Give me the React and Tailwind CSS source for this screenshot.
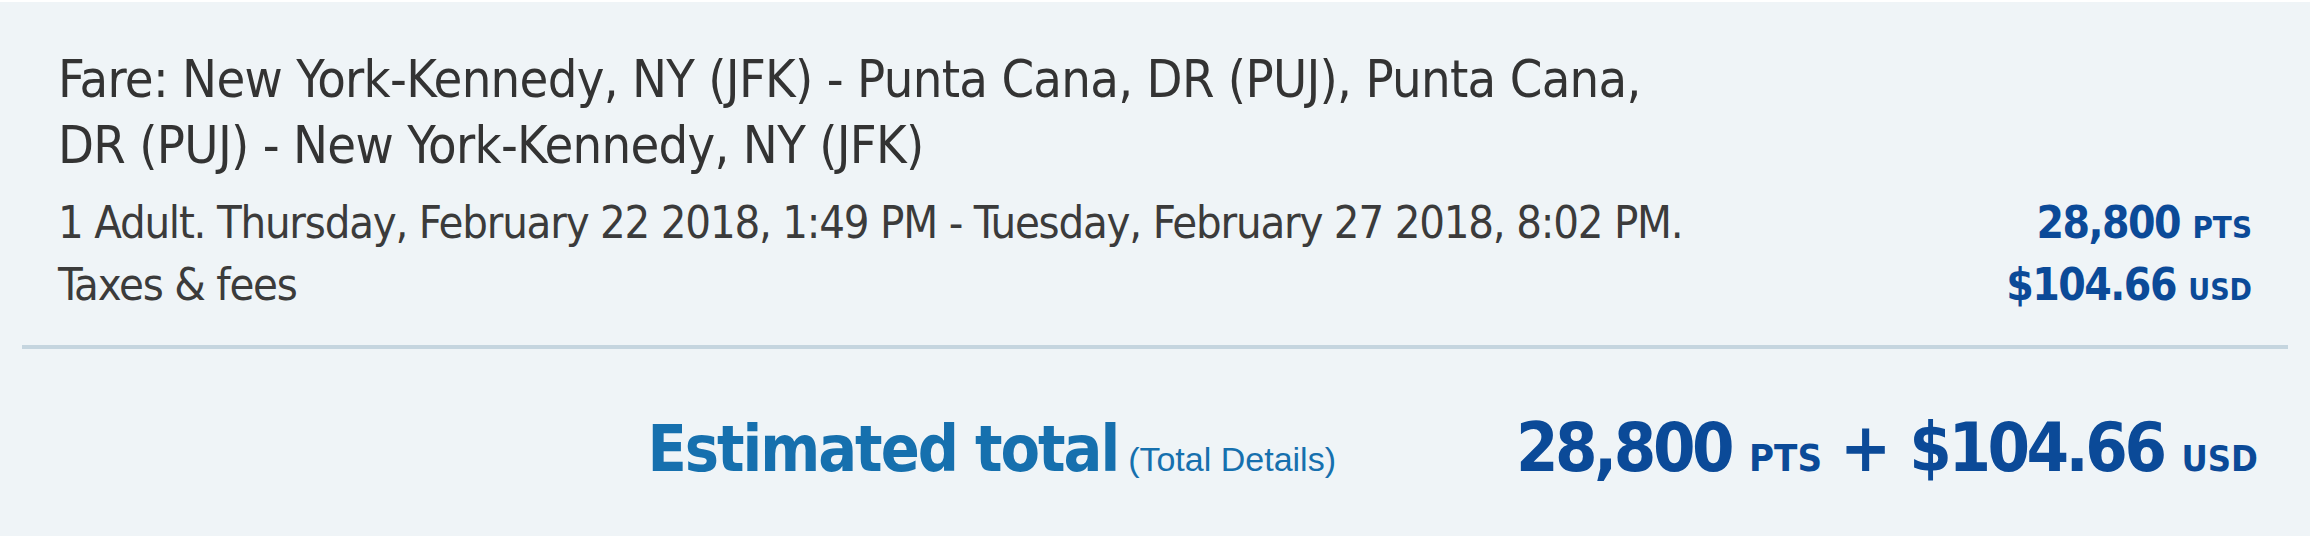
export default function App() {
  return (
    <div
      className="w-full bg-[#eff4f7] border-t-2 border-white"
      style={{ fontFamily: '"Liberation Sans Narrow", "DejaVu Sans Condensed", "Liberation Sans", sans-serif' }}
    >
      {/* Fare details */}
      <div className="px-[58px] pt-[44px]">
        <p className="max-w-[1620px] text-[52px] leading-[66px] tracking-[-0.7px] text-[#333333]">
          Fare: New York-Kennedy, NY (JFK) - Punta Cana, DR (PUJ), Punta Cana, DR (PUJ) - New York-Kennedy, NY (JFK)
        </p>

        <div className="mt-[14px] text-[45px] leading-[62px] text-[#3b3b3b]">
          <div className="flex justify-between items-baseline">
            <span className="tracking-[-1.2px]">
              1 Adult. Thursday, February 22 2018, 1:49 PM - Tuesday, February 27 2018, 8:02 PM.
            </span>
            <span className="text-[44px] font-bold tracking-[-1.5px] text-[#0b4a98]">
              28,800 <span className="text-[31px] leading-none tracking-normal">PTS</span>
            </span>
          </div>
          <div className="flex justify-between items-baseline">
            <span className="tracking-[-1.2px]">Taxes &amp; fees</span>
            <span className="text-[44px] font-bold tracking-[-1.5px] text-[#0b4a98]">
              $104.66 <span className="text-[30px] leading-none tracking-normal">USD</span>
            </span>
          </div>
        </div>
      </div>

      <div className="mx-[22px] mt-[29px] h-[4px] bg-[#c5d5df]" />

      {/* Estimated total */}
      <div className="flex justify-end items-baseline gap-[180px] pl-[58px] pr-[52px] pt-[65px] pb-[54px]">
        <div className="flex items-baseline gap-[10px]">
          <span className="text-[64px] leading-none font-bold tracking-[-2px] text-[#1670ae]">Estimated total</span>
          <a
            href="#"
            className="text-[34px] leading-none text-[#1670ae]"
            style={{ fontFamily: '"Liberation Sans", Arial, sans-serif' }}
          >
            (Total Details)
          </a>
        </div>
        <div className="flex items-baseline gap-[18px] font-bold text-[#0b4a98] leading-none">
          <span className="text-[68px] tracking-[-3.5px]">28,800</span>
          <span className="text-[38px]">PTS</span>
          <span className="text-[68px]">+</span>
          <span className="text-[68px] tracking-[-3.5px]">$104.66</span>
          <span className="text-[36px]">USD</span>
        </div>
      </div>
    </div>
  );
}
